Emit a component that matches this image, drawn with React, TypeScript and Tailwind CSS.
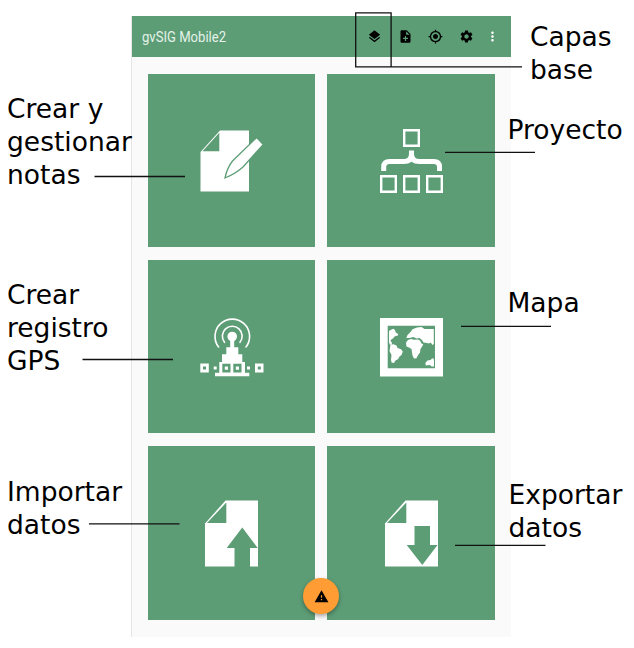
import type { ReactNode } from "react";
import { MdLayers, MdNoteAdd, MdMyLocation, MdSettings, MdMoreVert, MdWarning } from "react-icons/md";

const GREEN = "#5c9d76";

function NotesIcon() {
  return (
    <svg viewBox="0 0 90 80" className="h-20 w-[90px]">
      <path d="M10.5 32 30 10.5h29v61H10.5Z" fill="#fff" />
      <path d="M12.5 31.3 29.3 12.8v18.5Z" fill={GREEN} />
      <path d="M35 58Q37 48 42.500 41L66.700 17.500 73.300 24.500 53 47Q45 54 35 58Z" fill="#fff" stroke={GREEN} strokeWidth="1.3" />
    </svg>
  );
}

function ProjectIcon() {
  return (
    <svg viewBox="0 0 90 80" className="h-20 w-[90px]" fill="none" stroke="#fff">
      <path d="M34.2 10.2h14.6v15.6H34.2ZM11.2 56.2h14.6v15.6H11.2ZM34.2 56.2h14.6v15.6H34.2ZM57.2 56.2h14.6v15.6H57.2Z" strokeWidth="2.4" />
      <path d="M13.7 51v-4q0-5.5 6-5.5h14q7.8 0 7.8-7.5v-3.500V34q0 7.500 7.800 7.500h14.500q5.700 0 5.700 5.500v4" strokeWidth="5" />
    </svg>
  );
}

function GpsIcon() {
  return (
    <svg viewBox="0 0 90 75" className="h-[75px] w-[90px]">
      <g fill="none" stroke="#fff" strokeWidth="1.6" strokeLinecap="round">
        <path d="M28.600 37A17.300 17.300 0 1 1 56 37" />
        <path d="M34.500 32.300A9.900 9.900 0 1 1 50 32.300" />
      </g>
      <g fill="#fff">
        <circle cx="42.200" cy="26.500" r="4.800" />
        <path d="M40.200 29h4v8.300h4.100v7h4V52h2.700v10.700h4.300v3.600H25v-3.600h4.300V52H32v-7.700h4.300v-7h3.900Z" />
        <path d="M10.300 53.500h8.500v9h-8.500ZM65 53.500h8.500v9H65ZM23.700 56.500h3v3h-3ZM57 56.500h3v3h-3Z" />
      </g>
      <path d="M32.300 53.700h8.200v8.800h-8.200ZM43.300 53.700h8.200v8.800h-8.200ZM13 56.500h3v3h-3ZM67.800 56.500h3v3h-3Z" fill={GREEN} />
      <path d="M34.800 56.500h3.200v3.200h-3.200ZM45.800 56.500h3.200v3.200h-3.200Z" fill="#fff" />
    </svg>
  );
}

function MapIcon() {
  return (
    <svg viewBox="0 0 90 75" className="h-[75px] w-[90px]">
      <path d="M10 8h63v58.500H10Z" fill="#fff" />
      <path d="M17.700 15.700H65v42.600H17.700Z" fill={GREEN} />
      <g fill="#fff">
        <path d="m19 21 2.500-1.500 2-.7 1.500 1.200.7 2.500 2.600 1.500-.5 1.500-3.300 1-1.500 2-2 1.200-.5 1.500 1.500 1.300-.5 2.500-1.700-.5-.8-2.500Z" />
        <path d="m20.500 34.800 3-.6 3 1.300 1 2.500 3.500 1.300 1.800 2.200-1.300 3.500-2 1.500-1.300 2.500-2.700 1.500-1.500 2.500-2.500-.5-.5-3 .5-4.500-2-4Z" />
        <path d="m36.300 28 1.200-3 3-3 2-2.700 4.500-1.800 4.500-.5 3 2h9.300V34l-1.500 1-1.500-2.500-2 1-1.800-.5-3.500-.5-1.500-2.500-2.500-2-3 .5-3-1.500-4 1Z" />
        <path d="m36 32.500 2-2.500 3-1 3 .7 4-.2 2 1 1.500 3 1.800.8-1.500 2.700-1.300 2-.5 3.500-2.500 3.500-1 2.200-2.500.3-1.500-3-1-6.500-2.500-1.500-2.500-1Z" />
        <path d="m55.300 53 2.200-2.500 3-.5 1.500-1.500h1.700l.3 3v5h-2.500l-1.500-1.500-4.200.5Z" />
      </g>
    </svg>
  );
}

function FileIcon({ down = false }: { down?: boolean }) {
  return (
    <svg viewBox="0 0 90 85" className="h-[85px] w-[90px]">
      <path d="M15 33.500 35.500 10.500H68v66H15Z" fill="#fff" />
      <path d="M17 33 36.300 12.500V33Z" fill={GREEN} />
      <path
        d={down ? "M44.500 36H60v19h7.500L52.300 75 36.700 55h7.800Z" : "M52.300 37.500 67.700 58H60v19H44.500V58h-7.800Z"}
        fill={GREEN}
      />
    </svg>
  );
}

function Tile({ children }: { children: ReactNode }) {
  return <div className="bg-[#5c9d76]">{children}</div>;
}

function Label({ className, lines }: { className: string; lines: string[] }) {
  return (
    <p className={`absolute whitespace-nowrap font-['DejaVu_Sans',sans-serif] text-[26.500px] leading-[33.2px] text-black ${className}`}>
      {lines.map((line) => (
        <span key={line} className="block">{line}</span>
      ))}
    </p>
  );
}

export default function App() {
  return (
    <main className="relative h-[648px] w-[634px] overflow-hidden bg-white pl-[131px] pt-4">
      <section className="flex h-[621px] w-[380px] flex-col border-l border-[#e5e5e5] bg-[#fafafa]">
        <header className="flex h-[41px] shrink-0 items-center justify-between bg-[#5c9d76] pl-[9.500px] pr-[11px]">
          <h1 className="origin-left scale-x-[0.915] font-[Roboto,sans-serif] text-[14.3px] leading-5 text-[#e5f2e9]">gvSIG Mobile2</h1>
          <nav className="flex items-center text-black">
            <MdLayers size={15} className="mr-[15.5px]" />
            <MdNoteAdd size={15} className="mr-[15.5px]" />
            <MdMyLocation size={15} className="mr-[15.5px]" />
            <MdSettings size={15} className="mr-[11.500px]" />
            <MdMoreVert size={15} className="text-white" />
          </nav>
        </header>
        <div className="ml-4 mt-[17px] grid grid-cols-[167px_168px] grid-rows-[173px_173px_174px] gap-x-3 gap-y-[13px]">
          <Tile><div className="pl-[42px] pt-[46px]"><NotesIcon /></div></Tile>
          <Tile><div className="pl-[43px] pt-[46px]"><ProjectIcon /></div></Tile>
          <Tile><div className="pl-[42px] pt-[50px]"><GpsIcon /></div></Tile>
          <Tile><div className="pl-[43px] pt-[50px]"><MapIcon /></div></Tile>
          <Tile><div className="pl-[42px] pt-[44px]"><FileIcon /></div></Tile>
          <Tile><div className="pl-[43px] pt-[44px]"><FileIcon down /></div></Tile>
        </div>
      </section>

      <button className="absolute left-[303px] top-[578px] flex size-9 items-center justify-center rounded-full bg-[#ff9c33] text-black shadow-[0_2px_4px_rgba(0,0,0,0.35)]">
        <MdWarning size={15} />
      </button>

      <Label className="left-[7px] top-[92px]" lines={["Crear y", "gestionar", "notas"]} />
      <Label className="left-[7px] top-[278px]" lines={["Crear", "registro", "GPS"]} />
      <Label className="left-[7px] top-[475px]" lines={["Importar", "datos"]} />
      <Label className="left-[530px] top-[20px]" lines={["Capas", "base"]} />
      <Label className="left-[507.500px] top-[113px]" lines={["Proyecto"]} />
      <Label className="left-[507.500px] top-[286px]" lines={["Mapa"]} />
      <Label className="left-[508.500px] top-[478px]" lines={["Exportar", "datos"]} />

      <svg viewBox="0 0 634 648" className="pointer-events-none absolute inset-0 h-[648px] w-[634px]" fill="none" stroke="#111" strokeWidth="1.3">
        <path d="M355.700 12.800h35.400v54h-35.400ZM391 66.800h131M94.500 176.500H185M445 152.300h90M82.500 359.500H173M461 326.300h90M89 523.800h90.500M455 545.300h90.500" />
      </svg>
    </main>
  );
}
